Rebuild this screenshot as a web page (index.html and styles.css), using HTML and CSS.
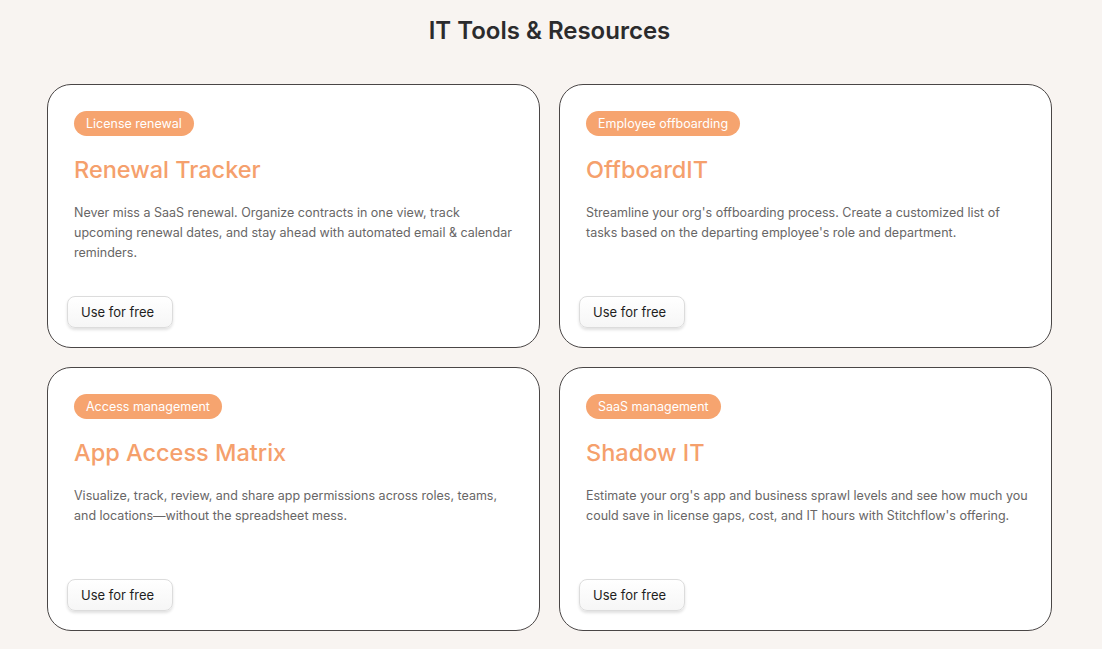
FILE: index.html
```html
<!DOCTYPE html>
<html>
<head>
<meta charset="utf-8">
<link rel="stylesheet" href="styles.css">
</head>
<body>
<main class="page">
  <h1 class="title">IT Tools &amp; Resources</h1>
  <section class="grid">
    <article class="card">
      <span class="badge">License renewal</span>
      <h2 class="card-title">Renewal Tracker</h2>
      <p class="card-text">Never miss a SaaS renewal. Organize contracts in one view, track upcoming renewal dates, and stay ahead with automated email &amp; calendar reminders.</p>
      <button class="btn">Use for free</button>
    </article>
    <article class="card">
      <span class="badge">Employee offboarding</span>
      <h2 class="card-title">OffboardIT</h2>
      <p class="card-text">Streamline your org's offboarding process. Create a customized list of tasks based on the departing employee's role and department.</p>
      <button class="btn">Use for free</button>
    </article>
    <article class="card">
      <span class="badge">Access management</span>
      <h2 class="card-title">App Access Matrix</h2>
      <p class="card-text">Visualize, track, review, and share app permissions across roles, teams, and locations—without the spreadsheet mess.</p>
      <button class="btn">Use for free</button>
    </article>
    <article class="card">
      <span class="badge">SaaS management</span>
      <h2 class="card-title">Shadow IT</h2>
      <p class="card-text">Estimate your org's app and business sprawl levels and see how much you could save in license gaps, cost, and IT hours with Stitchflow's offering.</p>
      <button class="btn">Use for free</button>
    </article>
  </section>
</main>
</body>
</html>
```
FILE: styles.css
```css
* { box-sizing: border-box; }
html, body { margin: 0; padding: 0; }
body {
  background: #f8f4f1;
  font-family: Inter, "Noto Sans", sans-serif;
  color: #2b2b2b;
}
.page {
  width: 1005px;
  margin: 0 0 0 47px;
  padding-top: 15px;
}
.title {
  margin: 0 0 37px;
  text-align: center;
  font-size: 24px;
  line-height: 32px;
  font-weight: 600;
  color: #2b2b2d;
}
.grid {
  display: grid;
  grid-template-columns: 1fr 1fr;
  gap: 19px;
}
.card {
  height: 264px;
  background: #fff;
  border: 1px solid #4a4646;
  border-radius: 24px;
  padding: 26px 18px 19px 19px;
  display: flex;
  flex-direction: column;
  align-items: flex-start;
}
.badge {
  margin-left: 7px;
  background: #f6a46f;
  color: #fff;
  font-size: 12.5px;
  line-height: 25px;
  height: 25px;
  padding: 0 12px;
  border-radius: 13px;
}
.card-title {
  margin: 20px 0 0 7px;
  font-size: 23.5px;
  line-height: 28px;
  font-weight: 500;
  color: #f5a06c;
}
.card-text {
  margin: 19px 0 0 7px;
  font-size: 12.5px;
  line-height: 20px;
  color: #686666;
}
.btn {
  margin-top: auto;
  width: 106px;
  height: 32px;
  background: linear-gradient(#ffffff, #f6f6f6);
  border: 1px solid #dcdcdc;
  border-radius: 8px;
  box-shadow: 0 2px 3px rgba(0,0,0,0.12);
  font-family: inherit;
  font-size: 13px;
  color: #1e1e1e;
  padding: 0 0 0 13px;
  text-align: left;
  cursor: pointer;
}
```
